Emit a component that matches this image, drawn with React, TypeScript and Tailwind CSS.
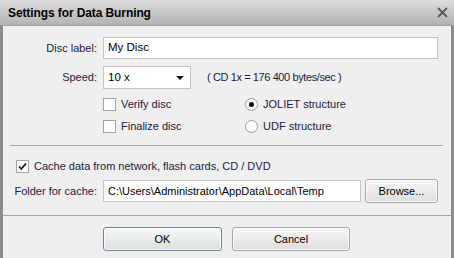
import React from 'react';

const ink = 'text-[#1c2040]';

function Check({ checked }: { checked?: boolean }) {
  return (
    <span className="w-[13px] h-[13px] border border-[#a3a3a3] bg-white flex items-center justify-center shrink-0">
      {checked && (
        <svg width="9" height="9" viewBox="0 0 9 9">
          <path d="M1 4.5 L3.3 7 L8 1.5" stroke="#111" strokeWidth="1.8" fill="none" />
        </svg>
      )}
    </span>
  );
}

function Radio({ checked }: { checked?: boolean }) {
  return (
    <span className="w-[13px] h-[13px] rounded-full border border-[#9c9c9c] bg-white flex items-center justify-center shrink-0">
      {checked && <span className="w-[5px] h-[5px] rounded-full bg-[#111]" />}
    </span>
  );
}

function Button({ label, primary, w }: { label: string; primary?: boolean; w: string }) {
  return (
    <div
      className={`${w} h-[24px] rounded-[3px] border ${
        primary ? 'border-[#6f84ad]' : 'border-[#a8a8a8]'
      } bg-gradient-to-b from-[#f7f7f7] to-[#dedede] flex items-center justify-center text-[11px] text-black shadow-[inset_0_0_0_1px_#fbfbfb]`}
    >
      {label}
    </div>
  );
}

export default function App() {
  return (
    <div
      className="w-[454px] h-[258px] flex flex-col overflow-hidden select-none"
      style={{ fontFamily: '"Liberation Sans", Arial, sans-serif' }}
    >
      {/* Title bar */}
      <div className="h-[25px] shrink-0 flex items-center justify-between pl-[8px] pr-[6px] bg-gradient-to-b from-[#dcdcdc] to-[#b3b3b3]">
        <span className="text-[12px] font-bold text-black tracking-[-0.1px]">Settings for Data Burning</span>
        <svg width="11" height="11" viewBox="0 0 11 11">
          <path d="M1 1 L10 10 M10 1 L1 10" stroke="#5b5b5b" strokeWidth="1.8" />
        </svg>
      </div>

      {/* Body */}
      <div className={`flex-1 flex flex-col border-x-[3px] border-[#8b8b8b] border-t border-t-[#a0a0a0] bg-[#efefef] text-[11px] ${ink}`}>
        {/* Disc label */}
        <div className="flex items-center mt-[11px] pr-[13px]">
          <span className="w-[94px] text-right">Disc label:</span>
          <div className="ml-[6px] flex-1 h-[22px] bg-white border border-[#c3c3c3] flex items-center pl-[4px] text-[11.5px] text-black">
            My Disc
          </div>
        </div>

        {/* Speed */}
        <div className="flex items-center mt-[7px]">
          <span className="w-[94px] text-right">Speed:</span>
          <div className="ml-[6px] w-[88px] h-[23px] bg-white border border-[#c3c3c3] flex items-center justify-between pl-[4px] pr-[6px] text-[11.5px] text-black">
            <span>10 x</span>
            <svg width="8" height="4" viewBox="0 0 8 4">
              <path d="M0 0 H8 L4 4 Z" fill="#111" />
            </svg>
          </div>
          <span className="ml-[16px] tracking-[-0.4px]">( CD 1x = 176 400 bytes/sec )</span>
        </div>

        {/* Options */}
        <div className="flex mt-[4px]">
          <div className="ml-[100px] w-[142px] flex flex-col">
            <div className="h-[22px] flex items-center gap-[5px]">
              <Check />
              <span>Verify disc</span>
            </div>
            <div className="h-[22px] flex items-center gap-[5px]">
              <Check />
              <span>Finalize disc</span>
            </div>
          </div>
          <div className="flex flex-col">
            <div className="h-[22px] flex items-center gap-[5px]">
              <Radio checked />
              <span>JOLIET structure</span>
            </div>
            <div className="h-[22px] flex items-center gap-[5px]">
              <Radio />
              <span>UDF structure</span>
            </div>
          </div>
        </div>

        <div className="mt-[8px] ml-[7px] mr-[8px] h-px bg-[#a7a7a7]" />

        {/* Cache */}
        <div className="h-[22px] mt-[9px] pl-[13px] flex items-center gap-[5px]">
          <Check checked />
          <span>Cache data from network, flash cards, CD / DVD</span>
        </div>

        <div className="flex items-center mt-[2px] pr-[13px]">
          <span className="w-[94px] text-right">Folder for cache:</span>
          <div className="ml-[6px] flex-1 h-[22px] bg-white border border-[#c3c3c3] flex items-center pl-[4px] text-[11px] text-black">
            C:\Users\Administrator\AppData\Local\Temp
          </div>
          <div className="ml-[4px]">
            <Button label="Browse..." w="w-[73px]" />
          </div>
        </div>

        <div className="mt-[12px] h-px bg-[#a7a7a7]" />

        {/* Buttons */}
        <div className="flex mt-[11px] ml-[100px] gap-[10px]">
          <Button label="OK" primary w="w-[119px]" />
          <Button label="Cancel" w="w-[118px]" />
        </div>
      </div>
    </div>
  );
}
